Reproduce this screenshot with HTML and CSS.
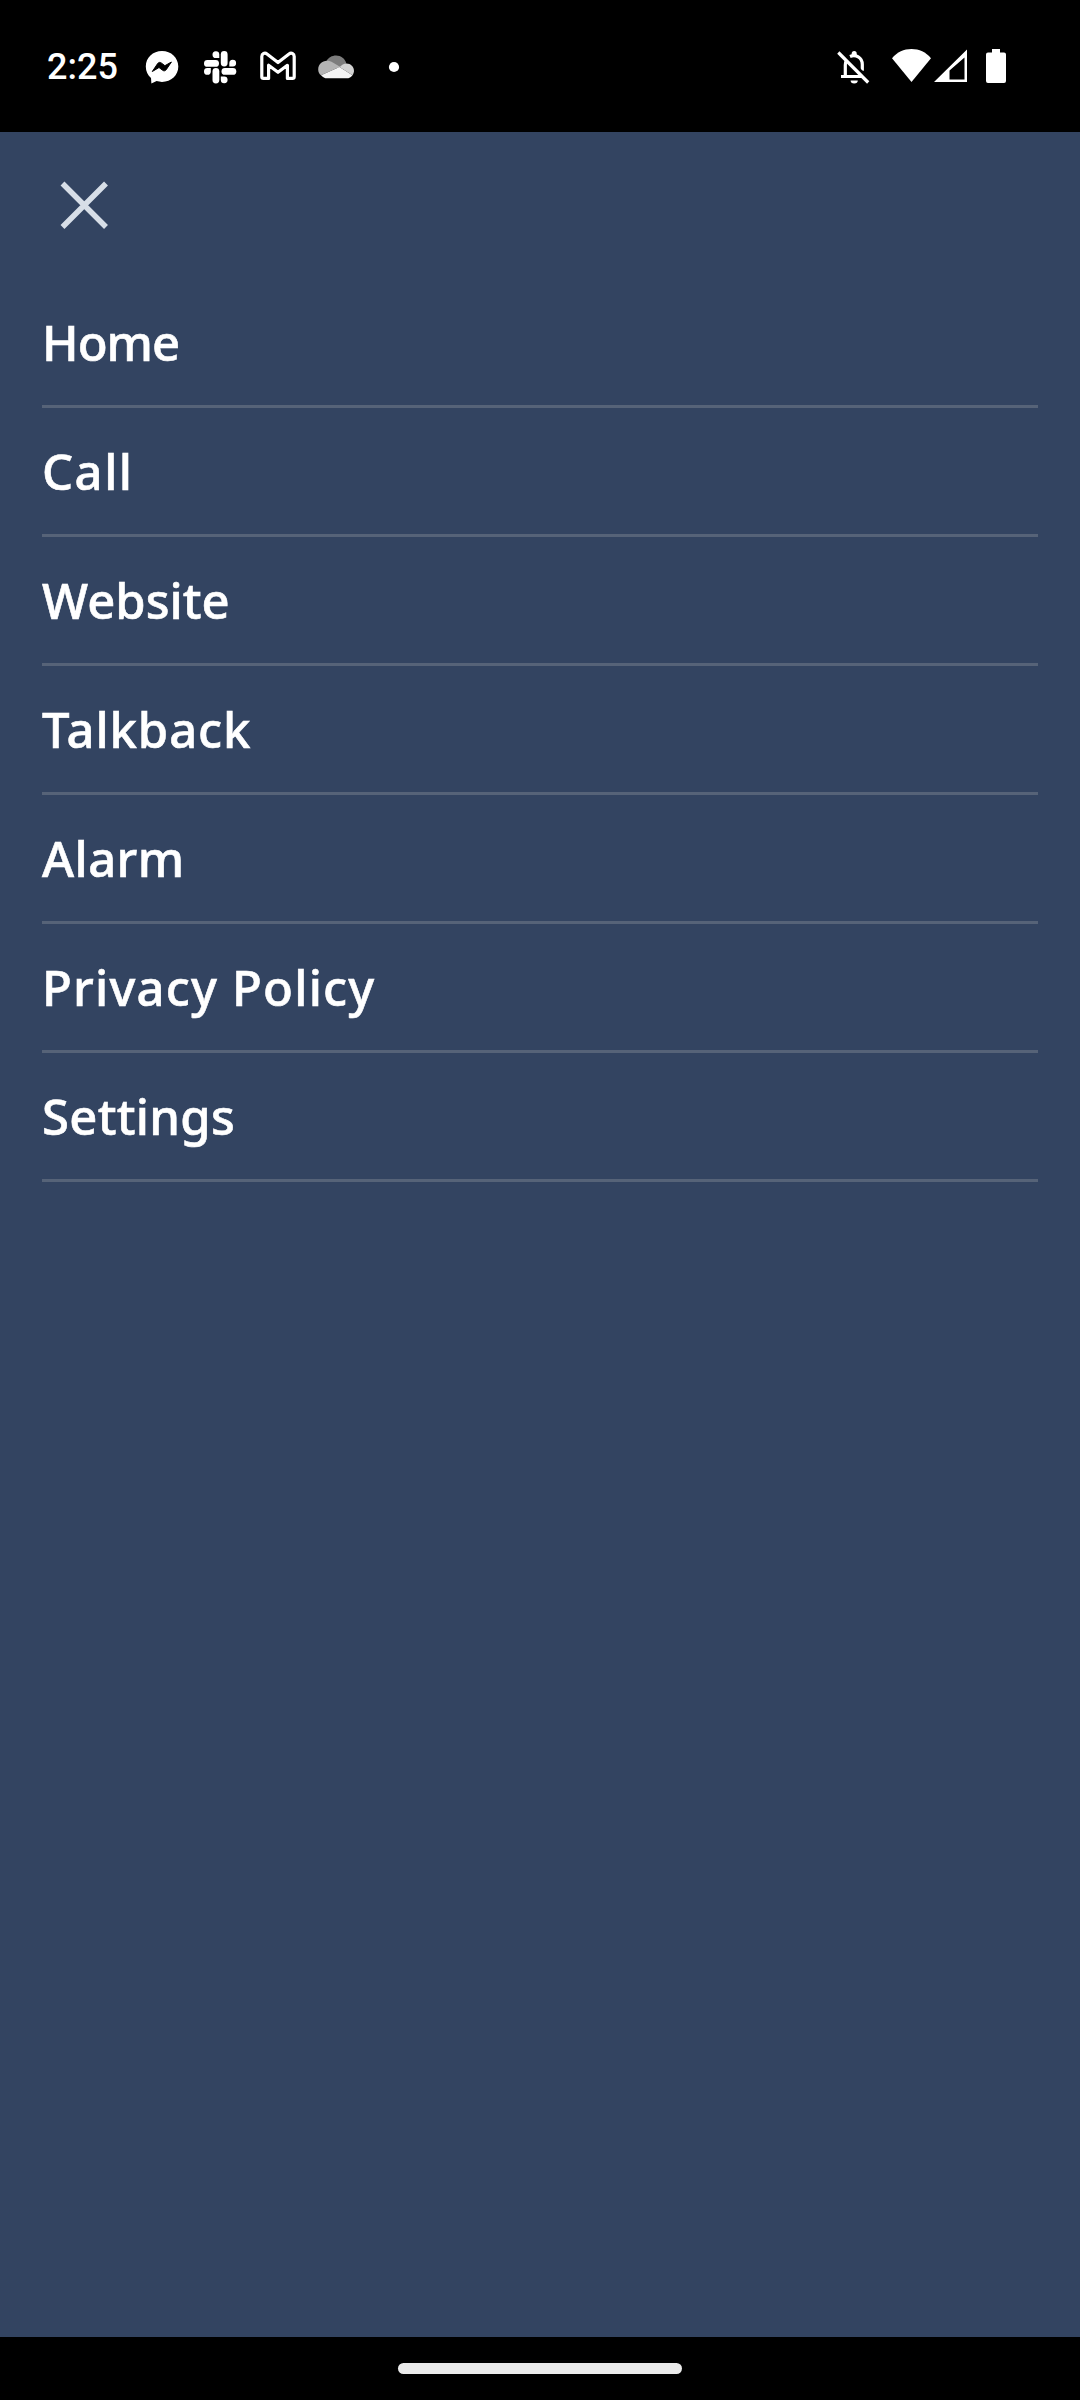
FILE: index.html
```html
<!DOCTYPE html>
<html lang="en">
<head>
    <meta charset="UTF-8">
    <meta name="viewport" content="width=device-width, initial-scale=1.0">
    <title>Menu</title>
    <link rel="stylesheet" href="styles.css">
</head>
<body>
    <header class="status-bar">
        <span class="time">2:25</span>
        <div class="notifications">
            <!-- messenger -->
            <svg width="36" height="36" viewBox="0 0 36 36">
                <path fill="#fff" d="M18 2C8.800 2 1.800 8.700 1.800 17.500c0 4.700 2 8.700 5.200 11.400l.4 5.600 5.200-2.400c1.700.5 3.500.8 5.400.8 9.200 0 16.300-6.700 16.300-15.400S27.200 2 18 2z"/>
                <path fill="#000" stroke="#000" stroke-linejoin="round" d="M8.300 22.500l5.400-8c.8-1.200 2.300-1.500 3.500-.6l3.700 2.800 6.500-3.700-5.200 7.700c-.8 1.200-2.300 1.500-3.500.6l-3.700-2.800z"/>
            </svg>
            <!-- slack -->
            <svg width="36" height="36" viewBox="0 0 36 36" fill="#fff">
                <rect x="2" y="11" width="15" height="6.800" rx="3.400"/>
                <rect x="18.800" y="2" width="6.800" height="15.500" rx="3.400"/>
                <rect x="19.500" y="19" width="14.800" height="6.800" rx="3.400"/>
                <rect x="10.500" y="19" width="6.800" height="15.500" rx="3.400"/>
                <path d="M17.300 9V5.400A3.400 3.400 0 1 0 13.900 9z"/>
                <path d="M27.300 17.600h3.600a3.400 3.400 0 1 0-3.600-3.400z"/>
                <path d="M18.800 27.500v3.600a3.400 3.400 0 1 0 3.400-3.600z"/>
                <path d="M8.800 19H5.400a3.400 3.400 0 1 0 3.400 3.400z"/>
            </svg>
            <!-- mail -->
            <svg width="36" height="36" viewBox="0 0 36 36">
                <path fill="none" stroke="#fff" stroke-width="3.200" stroke-linejoin="round" d="M1.800 7.500c0-3 3-4.300 5.200-2.600L18 13.500l11-8.600c2.200-1.700 5.200-.4 5.200 2.600v20.200c0 1-.7 1.700-1.700 1.700h-5.100V16.300L18 23.300l-9.400-7v13.100H3.500c-1 0-1.700-.7-1.700-1.700z"/>
            </svg>
            <!-- cloud -->
            <svg width="36" height="36" viewBox="0 0 36 36">
                <path fill="#7d7d7d" d="M8.500 12C10.300 8.500 14 6.400 18 6.400c5 0 9 3.200 10.400 8L20 19z"/>
                <path fill="#b4b4b4" d="M9 11.800c2.300 0 4 .6 5.800 1.700L22 17.700 3 26.300C1.200 24.700.2 22.700.2 20.400.2 15.500 4 11.800 9 11.800z"/>
                <path fill="#d2d2d2" d="M21.500 18c2-2 4.300-3.600 7-3.600 4.200 0 7.500 3.300 7.500 7.400 0 1.700-.6 3.100-1.500 4.500z"/>
                <path fill="#f4f4f4" d="M3 26.200l18.500-8.300 13 8.300c-1.300 2-3.400 3.100-6 3.100H9.300c-2.600 0-4.600-1-6.300-3.100z"/>
            </svg>
            <!-- more -->
            <svg width="36" height="36" viewBox="0 0 36 36">
                <circle cx="18" cy="18" r="5.100" fill="#fff"/>
            </svg>
        </div>
        <div class="system">
            <svg class="bell" width="36" height="36" viewBox="0 0 36 36">
                <path fill="#fff" d="M14.600 31.400h7.200a3.600 3 0 0 1-7.200 0z"/>
                <path fill="none" stroke="#fff" stroke-width="3.200" d="M5 27.500h22M9.300 27.500V16c0-1.700.4-3.300 1.200-4.700M14 7.500c5.500-2.500 12.300.8 12.300 8v6.300"/>
                <path fill="#fff" d="M15.700 7V4.600a2.500 2.500 0 0 1 5 0V7z"/>
                <path stroke="#000" stroke-width="2.500" d="M4.500 1.500l30 30"/>
                <path stroke="#fff" stroke-width="3.200" d="M2.300 3.500l29.900 30"/>
            </svg>
            <svg class="wifi" width="39" height="36" viewBox="0 0 39 36">
                <path fill="#fff" d="M0 9.200C5.200 3 11.800 0 19.500 0S33.800 3 39 9.200L19.500 33z"/>
            </svg>
            <svg class="signal" width="33" height="36" viewBox="0 0 33 36">
                <path fill="#fff" fill-rule="evenodd" d="M0 33L33 .5V33zM15.500 21.500V30.500H30.500V8.500z"/>
            </svg>
            <svg class="battery" width="20" height="36" viewBox="0 0 20 36">
                <path fill="#fff" d="M6 0h8v3.500h4a2 2 0 0 1 2 2V32a2 2 0 0 1-2 2H2a2 2 0 0 1-2-2V5.500a2 2 0 0 1 2-2h4z"/>
            </svg>
        </div>
    </header>

    <main class="menu">
        <button class="close" aria-label="Close">
            <svg width="48" height="48" viewBox="0 0 48 48">
                <path stroke="#d7dee7" stroke-width="5.500" d="M2.500 2.500l43.500 43.500M46 2.500l-43.500 43.500"/>
            </svg>
        </button>
        <nav class="links">
            <a class="link home">Home</a>
            <a class="link call">Call</a>
            <a class="link website">Website</a>
            <a class="link talkback">Talkback</a>
            <a class="link alarm">Alarm</a>
            <a class="link privacy">Privacy Policy</a>
            <a class="link settings">Settings</a>
        </nav>
    </main>

    <footer class="nav-bar">
        <div class="handle"></div>
    </footer>
</body>
</html>
```
FILE: styles.css
```css
* {
    box-sizing: border-box;
}
body {
    margin: 0;
    height: 2400px;
    display: flex;
    flex-direction: column;
    background-color: #000;
    color: #fff;
    font-family: 'Noto Sans', sans-serif;
}
svg {
    display: block;
}
.status-bar {
    height: 132px;
    padding: 2px 74px 0 47px;
    display: flex;
    align-items: center;
}
.time {
    width: 97px;
    font-family: Roboto, sans-serif;
    font-size: 36px;
    font-weight: 500;
    line-height: 36px;
}
.notifications {
    display: flex;
    gap: 22px;
}
.system {
    display: flex;
    margin-left: auto;
}
.bell {
    margin-right: 20px;
}
.wifi {
    margin-right: 3px;
}
.signal {
    margin-right: 19px;
}
.menu {
    flex: 1;
    padding: 49px 42px 0;
    background-color: #334461;
}
.close {
    display: block;
    margin: 0 0 50px 18px;
    padding: 0;
    border: none;
    background: none;
    cursor: pointer;
}
.links {
    display: flex;
    flex-direction: column;
}
.link {
    height: 129px;
    padding-top: 30px;
    border-bottom: 3px solid #566378;
    font-size: 49px;
    font-weight: 500;
    line-height: 66px;
    white-space: nowrap;
    -webkit-text-stroke: 0.6px #fff;
}
.home {
    letter-spacing: -1px;
}
.call {
    letter-spacing: 1.5px;
}
.talkback {
    letter-spacing: 0.9px;
}
.alarm {
    letter-spacing: 0.4px;
}
.privacy {
    letter-spacing: 1.2px;
}
.settings {
    letter-spacing: 0.3px;
}
.nav-bar {
    height: 63px;
    padding-top: 26px;
}
.handle {
    width: 284px;
    height: 11px;
    margin: 0 auto;
    border-radius: 6px;
    background-color: #ebebeb;
}
```
